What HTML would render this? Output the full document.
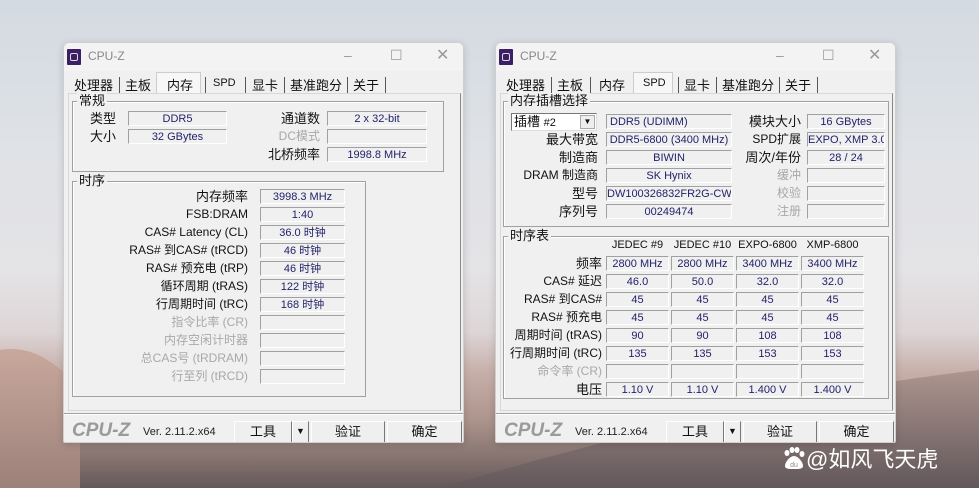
<!DOCTYPE html>
<html style="width:979px;height:488px;overflow:hidden"><head><meta charset="utf-8"><style>
*{margin:0;padding:0;box-sizing:border-box}
body{width:979px;height:488px;overflow:hidden;position:relative;font-family:"Liberation Sans","Noto Sans CJK SC",sans-serif;font-size:12px;color:#111;
background:linear-gradient(180deg,#d3dae1 0%,#dfe2e6 30%,#e4e3e6 55%,#ddd6d7 68%,#c8b0aa 76%,#ad948d 86%,#85736f 94%,#64585a 100%)}
.dune{position:absolute;left:0;top:330px;width:979px;height:158px;overflow:hidden}
.w{position:absolute;width:401px;height:401px;background:#f0f0f0;border:1px solid #cfcfcf;border-radius:6px 6px 2px 2px;overflow:hidden;box-shadow:0 2px 8px rgba(0,0,0,.15)}
.tb{position:absolute;left:0;top:0;width:100%;height:28px;background:#f3f3f3}
.ico{position:absolute;left:3px;top:6px;width:14px;height:16px;background:#3b1e63;border-radius:1px}
.ico:after{content:"";position:absolute;left:3px;top:4px;width:6px;height:6px;border:1px solid #ddd;border-radius:2px}
.tt{position:absolute;left:24px;top:6px;color:#888;font-size:12px}
.ctl{position:absolute;top:4px;color:#999;font-size:14px}
.tabs{position:absolute;left:6px;top:32px;height:20px;white-space:nowrap}
.tab{position:absolute;top:0;font-size:13px;color:#111}
.sep{position:absolute;top:2px;width:1px;height:16px;background:#555}
.tabsel{position:absolute;top:-3px;height:24px;background:#f7f7f7;border:1px solid #ccc;border-bottom:none}
.panel{position:absolute;left:4px;top:50px;width:393px;height:318px;border:1px solid #d8d8d8;border-right:1px solid #888;background:#f0f0f0}
.g{position:absolute;border:1px solid #a0a0a0;box-shadow:1px 1px 0 #fff inset}
.gl{position:absolute;background:#f0f0f0;padding:0 2px;font-size:13px;top:-9px;left:4px;line-height:16px}
.f{position:absolute;height:15px;background:#f0f0f0;border-top:1px solid #a0a0a0;border-left:1px solid #a0a0a0;border-bottom:1px solid #fff;border-right:1px solid #fff;color:#22226a;text-align:center;font-size:11px;line-height:14px;white-space:nowrap;overflow:hidden}
.l{position:absolute;text-align:right;font-size:12px;line-height:15px;white-space:nowrap}
.d{color:#a8a8a8}
.ft{position:absolute;left:0;top:370px;width:100%;height:2px;border-top:1px solid #a0a0a0;border-bottom:1px solid #fff}
.logo{position:absolute;left:8px;top:377px;font-size:19px;font-weight:bold;font-style:italic;color:#9a9a9a}
.ver{position:absolute;left:79px;top:383px;font-size:11px;color:#222}
.b{position:absolute;top:378px;height:22px;background:#efefef;border:1px solid #fff;border-right:1px solid #777;border-bottom:1px solid #777;text-align:center;font-size:13px;line-height:19px}
</style></head><body>
<svg class="dune" width="979" height="158" viewBox="0 0 979 158">
<defs><linearGradient id="a" x1="0" y1="0" x2="0" y2="1"><stop offset="0" stop-color="#c9a89c"/><stop offset="1" stop-color="#9c817a"/></linearGradient>
<linearGradient id="b" x1="0" y1="0" x2="0" y2="1"><stop offset="0" stop-color="#ad958f"/><stop offset="1" stop-color="#62575a"/></linearGradient></defs>
<path d="M0 20 C30 15 55 30 80 60 L80 158 L0 158Z" fill="url(#a)"/>
<path d="M440 158 C600 110 800 60 979 40 L979 158Z" fill="url(#b)"/>
</svg>

<!-- window 1 -->
<div class="w" style="left:63px;top:42px">
 <div class="tb"><div class="ico"></div><div class="tt">CPU-Z</div>
  <div class="ctl" style="left:280px">–</div><div class="ctl" style="left:326px">☐</div><div class="ctl" style="left:372px;font-size:16px;top:2px">✕</div></div>
 <div class="tabsel" style="left:92px;width:45px;top:29px"></div>
 <div class="tabs">
  <span class="tab" style="left:4px">处理器</span><span class="sep" style="left:49px"></span>
  <span class="tab" style="left:55px">主板</span>
  <span class="tab" style="left:97px">内存</span><span class="sep" style="left:135px"></span>
  <span class="tab" style="left:143px;font-size:11px;top:2px">SPD</span><span class="sep" style="left:175px"></span>
  <span class="tab" style="left:182px">显卡</span><span class="sep" style="left:214px"></span>
  <span class="tab" style="left:220px">基准跑分</span><span class="sep" style="left:277px"></span>
  <span class="tab" style="left:283px">关于</span><span class="sep" style="left:315px"></span>
 </div>
 <div class="panel"></div>
 <div class="g" style="left:8px;top:58px;width:372px;height:71px"><span class="gl">常规</span></div>
 <div class="l" style="left:20px;top:68px;width:32px;font-size:13px">类型</div><div class="f" style="left:64px;top:68px;width:99px">DDR5</div>
 <div class="l" style="left:20px;top:86px;width:32px;font-size:13px">大小</div><div class="f" style="left:64px;top:86px;width:99px">32 GBytes</div>
 <div class="l" style="left:190px;top:68px;width:66px;font-size:13px">通道数</div><div class="f" style="left:263px;top:68px;width:100px">2 x 32-bit</div>
 <div class="l d" style="left:190px;top:86px;width:66px">DC模式</div><div class="f" style="left:263px;top:86px;width:100px"></div>
 <div class="l" style="left:190px;top:104px;width:66px;font-size:13px">北桥频率</div><div class="f" style="left:263px;top:104px;width:100px">1998.8 MHz</div>
 <div class="g" style="left:8px;top:138px;width:294px;height:216px"><span class="gl">时序</span></div>
 <div class="l" style="left:40px;top:146px;width:144px;font-size:13px">内存频率</div><div class="f" style="left:196px;top:146px;width:85px">3998.3 MHz</div>
 <div class="l" style="left:40px;top:164px;width:144px">FSB:DRAM</div><div class="f" style="left:196px;top:164px;width:85px">1:40</div>
 <div class="l" style="left:40px;top:182px;width:144px">CAS# Latency (CL)</div><div class="f" style="left:196px;top:182px;width:85px">36.0 时钟</div>
 <div class="l" style="left:40px;top:200px;width:144px">RAS# 到CAS# (tRCD)</div><div class="f" style="left:196px;top:200px;width:85px">46 时钟</div>
 <div class="l" style="left:40px;top:218px;width:144px">RAS# 预充电 (tRP)</div><div class="f" style="left:196px;top:218px;width:85px">46 时钟</div>
 <div class="l" style="left:40px;top:236px;width:144px">循环周期 (tRAS)</div><div class="f" style="left:196px;top:236px;width:85px">122 时钟</div>
 <div class="l" style="left:40px;top:254px;width:144px">行周期时间 (tRC)</div><div class="f" style="left:196px;top:254px;width:85px">168 时钟</div>
 <div class="l d" style="left:40px;top:272px;width:144px">指令比率 (CR)</div><div class="f" style="left:196px;top:272px;width:85px"></div>
 <div class="l d" style="left:40px;top:290px;width:144px">内存空闲计时器</div><div class="f" style="left:196px;top:290px;width:85px"></div>
 <div class="l d" style="left:40px;top:308px;width:144px">总CAS号 (tRDRAM)</div><div class="f" style="left:196px;top:308px;width:85px"></div>
 <div class="l d" style="left:40px;top:326px;width:144px">行至列 (tRCD)</div><div class="f" style="left:196px;top:326px;width:85px"></div>
 <div class="ft"></div>
 <div class="logo">CPU-Z</div><div class="ver">Ver. 2.11.2.x64</div>
 <div class="b" style="left:170px;width:58px">工具</div><div class="b" style="left:228px;width:17px;font-size:9px">▼</div>
 <div class="b" style="left:247px;width:74px">验证</div><div class="b" style="left:323px;width:75px">确定</div>
</div>

<!-- window 2 -->
<div class="w" style="left:495px;top:42px">
 <div class="tb"><div class="ico"></div><div class="tt">CPU-Z</div>
  <div class="ctl" style="left:280px">–</div><div class="ctl" style="left:326px">☐</div><div class="ctl" style="left:372px;font-size:16px;top:2px">✕</div></div>
 <div class="tabsel" style="left:137px;width:40px;top:29px"></div>
 <div class="tabs">
  <span class="tab" style="left:4px">处理器</span><span class="sep" style="left:49px"></span>
  <span class="tab" style="left:55px">主板</span><span class="sep" style="left:88px"></span>
  <span class="tab" style="left:97px">内存</span>
  <span class="tab" style="left:141px;font-size:11px;top:2px">SPD</span><span class="sep" style="left:176px"></span>
  <span class="tab" style="left:182px">显卡</span><span class="sep" style="left:214px"></span>
  <span class="tab" style="left:220px">基准跑分</span><span class="sep" style="left:277px"></span>
  <span class="tab" style="left:283px">关于</span><span class="sep" style="left:315px"></span>
 </div>
 <div class="panel"></div>
 <div class="g" style="left:7px;top:58px;width:386px;height:126px"><span class="gl">内存插槽选择</span></div>
 <div style="position:absolute;left:15px;top:70px;width:86px;height:18px;background:#fff;border:1px solid #777;border-right-color:#ddd;border-bottom-color:#ddd;font-size:13px;line-height:16px;padding-left:2px">插槽 <span style="font-size:11px">#2</span><span style="position:absolute;right:1px;top:1px;width:15px;height:14px;background:#eee;border:1px solid #aaa;font-size:8px;text-align:center;line-height:12px">▼</span></div>
 <div class="f" style="left:110px;top:71px;width:126px;text-align:left;padding-left:3px">DDR5 (UDIMM)</div>
 <div class="l" style="left:20px;top:89px;width:82px;font-size:13px">最大带宽</div><div class="f" style="left:110px;top:89px;width:126px">DDR5-6800 (3400 MHz)</div>
 <div class="l" style="left:20px;top:107px;width:82px;font-size:13px">制造商</div><div class="f" style="left:110px;top:107px;width:126px">BIWIN</div>
 <div class="l" style="left:0px;top:125px;width:102px">DRAM 制造商</div><div class="f" style="left:110px;top:125px;width:126px">SK Hynix</div>
 <div class="l" style="left:20px;top:143px;width:82px;font-size:13px">型号</div><div class="f" style="left:110px;top:143px;width:126px;text-align:left">DW100326832FR2G-CW00</div>
 <div class="l" style="left:20px;top:161px;width:82px;font-size:13px">序列号</div><div class="f" style="left:110px;top:161px;width:126px">00249474</div>
 <div class="l" style="left:240px;top:71px;width:65px;font-size:13px">模块大小</div><div class="f" style="left:311px;top:71px;width:78px">16 GBytes</div>
 <div class="l" style="left:240px;top:89px;width:65px">SPD扩展</div><div class="f" style="left:311px;top:89px;width:78px">EXPO, XMP 3.0</div>
 <div class="l" style="left:240px;top:107px;width:65px;font-size:13px">周次/年份</div><div class="f" style="left:311px;top:107px;width:78px">28 / 24</div>
 <div class="l d" style="left:240px;top:125px;width:65px">缓冲</div><div class="f" style="left:311px;top:125px;width:78px"></div>
 <div class="l d" style="left:240px;top:143px;width:65px">校验</div><div class="f" style="left:311px;top:143px;width:78px"></div>
 <div class="l d" style="left:240px;top:161px;width:65px">注册</div><div class="f" style="left:311px;top:161px;width:78px"></div>

 <div class="g" style="left:7px;top:193px;width:386px;height:163px"><span class="gl">时序表</span></div>
 <div class="l" style="left:110px;top:195px;width:63px;text-align:center;font-size:11px">JEDEC #9</div>
 <div class="l" style="left:175px;top:195px;width:63px;text-align:center;font-size:11px">JEDEC #10</div>
 <div class="l" style="left:240px;top:195px;width:63px;text-align:center;font-size:11px">EXPO-6800</div>
 <div class="l" style="left:305px;top:195px;width:63px;text-align:center;font-size:11px">XMP-6800</div>
 <div class="l" style="left:0;top:213px;width:106px;font-size:13px">频率</div>
 <div class="f" style="left:110px;top:213px;width:63px">2800 MHz</div><div class="f" style="left:175px;top:213px;width:63px">2800 MHz</div><div class="f" style="left:240px;top:213px;width:63px">3400 MHz</div><div class="f" style="left:305px;top:213px;width:63px">3400 MHz</div>
 <div class="l" style="left:0;top:231px;width:106px">CAS# 延迟</div>
 <div class="f" style="left:110px;top:231px;width:63px">46.0</div><div class="f" style="left:175px;top:231px;width:63px">50.0</div><div class="f" style="left:240px;top:231px;width:63px">32.0</div><div class="f" style="left:305px;top:231px;width:63px">32.0</div>
 <div class="l" style="left:0;top:249px;width:106px">RAS# 到CAS#</div>
 <div class="f" style="left:110px;top:249px;width:63px">45</div><div class="f" style="left:175px;top:249px;width:63px">45</div><div class="f" style="left:240px;top:249px;width:63px">45</div><div class="f" style="left:305px;top:249px;width:63px">45</div>
 <div class="l" style="left:0;top:267px;width:106px">RAS# 预充电</div>
 <div class="f" style="left:110px;top:267px;width:63px">45</div><div class="f" style="left:175px;top:267px;width:63px">45</div><div class="f" style="left:240px;top:267px;width:63px">45</div><div class="f" style="left:305px;top:267px;width:63px">45</div>
 <div class="l" style="left:0;top:285px;width:106px">周期时间 (tRAS)</div>
 <div class="f" style="left:110px;top:285px;width:63px">90</div><div class="f" style="left:175px;top:285px;width:63px">90</div><div class="f" style="left:240px;top:285px;width:63px">108</div><div class="f" style="left:305px;top:285px;width:63px">108</div>
 <div class="l" style="left:0;top:303px;width:106px">行周期时间 (tRC)</div>
 <div class="f" style="left:110px;top:303px;width:63px">135</div><div class="f" style="left:175px;top:303px;width:63px">135</div><div class="f" style="left:240px;top:303px;width:63px">153</div><div class="f" style="left:305px;top:303px;width:63px">153</div>
 <div class="l d" style="left:0;top:321px;width:106px">命令率 (CR)</div>
 <div class="f" style="left:110px;top:321px;width:63px"></div><div class="f" style="left:175px;top:321px;width:63px"></div><div class="f" style="left:240px;top:321px;width:63px"></div><div class="f" style="left:305px;top:321px;width:63px"></div>
 <div class="l" style="left:0;top:339px;width:106px;font-size:13px">电压</div>
 <div class="f" style="left:110px;top:339px;width:63px">1.10 V</div><div class="f" style="left:175px;top:339px;width:63px">1.10 V</div><div class="f" style="left:240px;top:339px;width:63px">1.400 V</div><div class="f" style="left:305px;top:339px;width:63px">1.400 V</div>
 <div class="ft"></div>
 <div class="logo">CPU-Z</div><div class="ver">Ver. 2.11.2.x64</div>
 <div class="b" style="left:170px;width:58px">工具</div><div class="b" style="left:228px;width:17px;font-size:9px">▼</div>
 <div class="b" style="left:247px;width:74px">验证</div><div class="b" style="left:323px;width:75px">确定</div>
</div>

<!-- watermark -->
<svg style="position:absolute;left:782px;top:446px" width="24" height="24" viewBox="0 0 24 24"><g fill="#fff"><ellipse cx="5" cy="7" rx="2.5" ry="3"/><ellipse cx="10" cy="4" rx="2.5" ry="3"/><ellipse cx="15" cy="4" rx="2.5" ry="3"/><ellipse cx="20" cy="8" rx="2.5" ry="3"/><path d="M12 10c-4 0-9 6-9 10 0 3 4 3 9 3s9 0 9-3c0-4-5-10-9-10z"/></g><text x="12" y="21" font-size="7" text-anchor="middle" fill="#9b8580" font-family="Liberation Sans">du</text></svg>
<div style="position:absolute;left:806px;top:442px;color:#fff;font-size:22px;font-family:'Liberation Sans','Noto Sans CJK SC',sans-serif;white-space:nowrap">@如风飞天虎</div>
</body></html>
